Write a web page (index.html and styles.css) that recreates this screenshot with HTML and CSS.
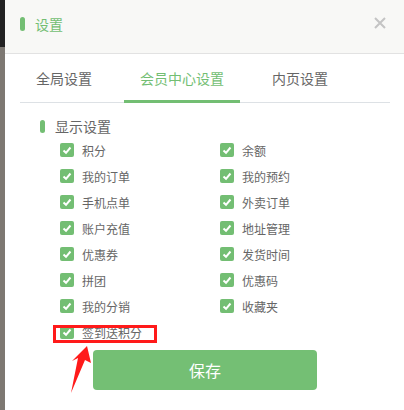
FILE: index.html
```html
<!DOCTYPE html>
<html>
<head>
  <title>设置</title>
  <link rel="stylesheet" href="styles.css">
</head>
<body>
  <div class="shell">
    <div class="edge"></div>

    <div class="dialog">
      <div class="dialog-head">
        <span class="bar"></span>
        <span class="dialog-title">设置</span>
        <svg class="close" width="12" height="12" viewBox="0 0 12 12">
          <path d="M1 1 L11 11 M11 1 L1 11" stroke="#c4c4c4" stroke-width="2" fill="none"/>
        </svg>
      </div>

      <div class="tabs">
        <div class="tab">全局设置</div>
        <div class="tab active">会员中心设置</div>
        <div class="tab">内页设置</div>
      </div>

      <div class="section-title">
        <span class="bar"></span>
        <span>显示设置</span>
      </div>

      <div class="options">
        <label class="option"><span class="check"></span>积分</label>
        <label class="option"><span class="check"></span>余额</label>
        <label class="option"><span class="check"></span>我的订单</label>
        <label class="option"><span class="check"></span>我的预约</label>
        <label class="option"><span class="check"></span>手机点单</label>
        <label class="option"><span class="check"></span>外卖订单</label>
        <label class="option"><span class="check"></span>账户充值</label>
        <label class="option"><span class="check"></span>地址管理</label>
        <label class="option"><span class="check"></span>优惠券</label>
        <label class="option"><span class="check"></span>发货时间</label>
        <label class="option"><span class="check"></span>拼团</label>
        <label class="option"><span class="check"></span>优惠码</label>
        <label class="option"><span class="check"></span>我的分销</label>
        <label class="option"><span class="check"></span>收藏夹</label>
        <label class="option marked"><span class="check"></span>签到送积分<span class="mark-box"></span></label>
      </div>

      <button class="save">保存</button>

      <!-- annotation arrow -->
      <svg class="arrow" width="30" height="50" viewBox="0 0 30 50">
        <polygon points="22,0 26,17 20,14 6,47 13,12 7,15" fill="#ff1a1a"/>
      </svg>
    </div>
  </div>
</body>
</html>
```

FILE: styles.css
```css
body {
  margin: 0;
  font-family: "Noto Sans CJK SC", "Microsoft YaHei", sans-serif;
  color: #666;
  background: #fff;
}

.shell {
  display: flex;
  height: 410px;
  overflow: hidden;
}

.edge {
  width: 5px;
  flex-shrink: 0;
  background: linear-gradient(#222 0, #222 47px, #7d7872 47px);
}

.dialog {
  flex: 1;
  position: relative;
  background: #fff;
}

.bar {
  display: inline-block;
  width: 5px;
  height: 14px;
  border-radius: 3px;
  background: #73be73;
}

.dialog-head {
  height: 48px;
  padding: 0 18px 5px 15px;
  display: flex;
  align-items: center;
  background: #f8f8f6;
  border-bottom: 1px solid #e2e2e2;
}

.dialog-title {
  margin-left: 10px;
  font-size: 14px;
  color: #73be73;
  flex: 1;
}

.close {
  margin-top: -3px;
}

.tabs {
  display: flex;
  gap: 16px;
  margin: 0 14px 0 15px;
  border-bottom: 1px solid #dde1e5;
}

.tab {
  padding: 3px 16px 0;
  line-height: 43px;
  font-size: 14px;
  color: #666;
  border-bottom: 3px solid transparent;
  margin-bottom: -1px;
}

.tab.active {
  color: #73be73;
  border-bottom-color: #73be73;
}

.section-title {
  display: flex;
  align-items: center;
  gap: 10px;
  margin: 13px 0 0 35px;
  height: 20px;
  font-size: 14px;
  color: #666;
}

.section-title .bar {
  height: 13px;
}

.options {
  display: grid;
  grid-template-columns: 160px 160px;
  grid-auto-rows: 26px;
  margin: 1px 0 0 55px;
}

.option {
  display: flex;
  align-items: center;
  font-size: 12px;
  color: #666;
}

.check {
  width: 14px;
  height: 14px;
  margin-right: 8px;
  border-radius: 2px;
  background: #73be73 url("data:image/svg+xml,%3Csvg xmlns='http://www.w3.org/2000/svg' width='14' height='14'%3E%3Cpath d='M3.5 7.5 L6 9.8 L10.5 4.5' stroke='white' stroke-width='2' fill='none'/%3E%3C/svg%3E") no-repeat center;
}

.marked {
  position: relative;
}

.mark-box {
  position: absolute;
  left: -7px;
  top: 6px;
  width: 104px;
  height: 18px;
  box-sizing: border-box;
  border: 3px solid #ff1a1a;
}

.save {
  display: block;
  width: 224px;
  height: 40px;
  margin: 5px 0 0 88px;
  border: none;
  border-radius: 4px;
  background: #74bf74;
  color: #fff;
  font-family: inherit;
  font-size: 16px;
}

.arrow {
  position: absolute;
  left: 60px;
  top: 346px;
}
```
